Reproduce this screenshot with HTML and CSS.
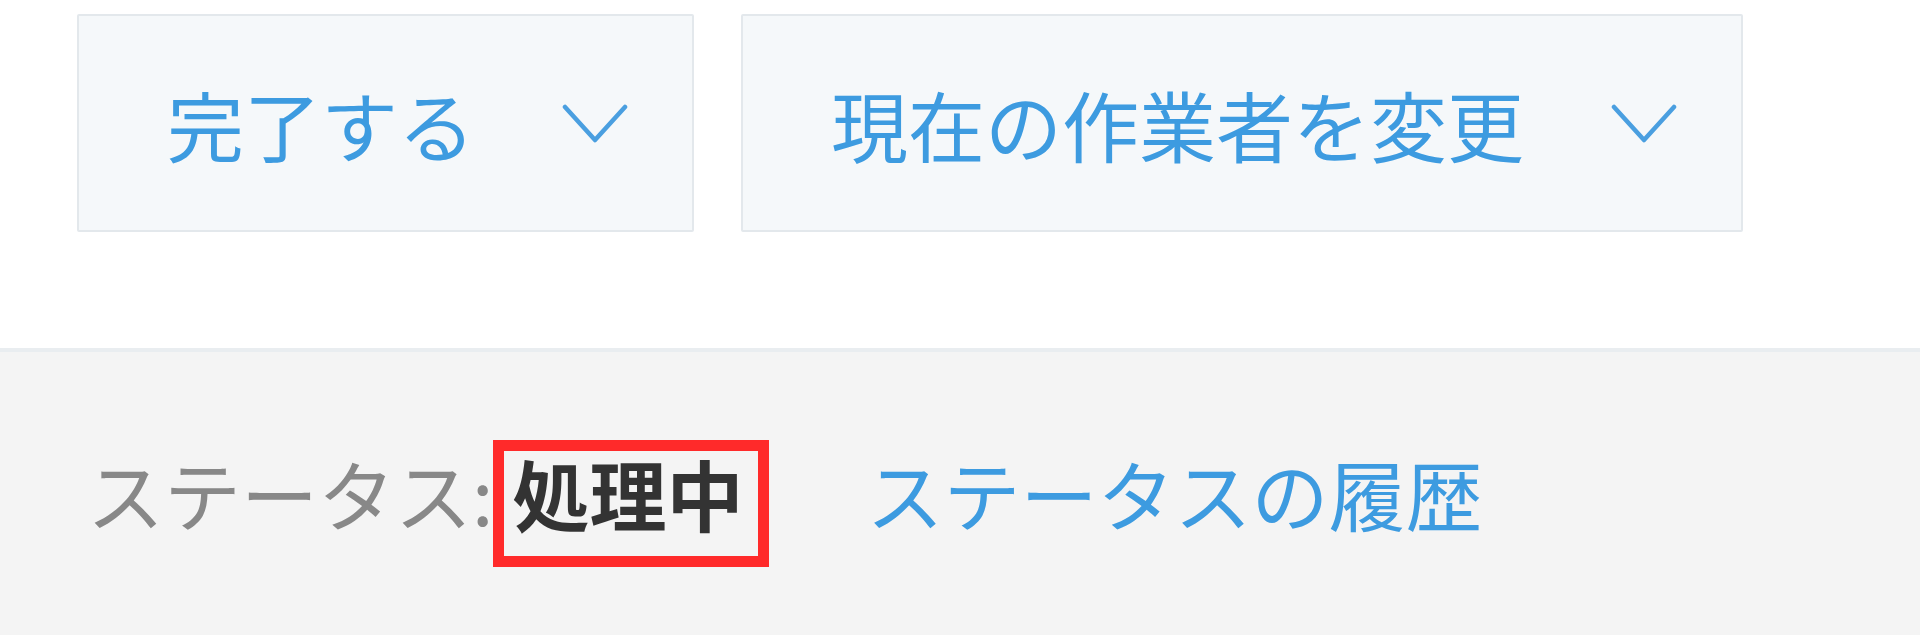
FILE: index.html
```html
<!DOCTYPE html>
<html lang="ja">
<head>
<meta charset="utf-8">
<title>ステータス</title>
<link rel="stylesheet" href="styles.css">
</head>
<body>
<div class="actions">
  <button class="action-btn" type="button">
    <span class="action-label">完了する</span>
    <svg class="chevron" width="66" height="40" viewBox="0 0 66 40"><polyline points="3,4 33,37 63,4" fill="none" stroke="#4a9fe0" stroke-width="4.5" stroke-linecap="round" stroke-linejoin="round"/></svg>
  </button>
  <button class="action-btn" type="button">
    <span class="action-label">現在の作業者を変更</span>
    <svg class="chevron" width="66" height="40" viewBox="0 0 66 40"><polyline points="3,4 33,37 63,4" fill="none" stroke="#4a9fe0" stroke-width="4.5" stroke-linecap="round" stroke-linejoin="round"/></svg>
  </button>
</div>
<div class="status-bar">
  <div class="status-row">
    <span class="status-label">ステータス:</span>
    <span class="status-value">処理中</span>
    <a class="status-history" href="#">ステータスの履歴</a>
  </div>
</div>
</body>
</html>
```

FILE: styles.css
```css
html, body {
  margin: 0;
  padding: 0;
  height: 100%;
}
body {
  background: #ffffff;
  font-family: "Noto Sans CJK JP", "Noto Sans", sans-serif;
  display: flex;
  flex-direction: column;
}
.actions {
  display: flex;
  gap: 47px;
  padding: 14px 0 0 77px;
  height: 348px;
  box-sizing: border-box;
  flex: none;
}
.action-btn {
  display: flex;
  align-items: center;
  height: 218px;
  box-sizing: border-box;
  padding: 0 64px 0 88px;
  background: #f5f8fa;
  border: 2px solid #e3e8ec;
  border-radius: 2px;
  font-family: inherit;
  cursor: pointer;
}
.action-label {
  font-size: 77px;
  font-weight: 400;
  line-height: 1;
  color: #3d9be0;
}
.chevron {
  display: block;
  margin-left: 87px;
  flex: none;
}
.status-bar {
  flex: 1;
  background: #f4f4f4;
  border-top: 4px solid #e9edf0;
  padding: 88px 0 0 87px;
}
.status-row {
  display: flex;
  align-items: baseline;
  font-size: 77px;
  font-weight: 400;
  line-height: 1;
}
.status-label {
  color: #888888;
}
.status-value {
  display: inline-block;
  color: #333333;
  font-weight: 700;
  border: 11px solid #ff2a2a;
  padding: 3px 15px 25px 8px;
}
.status-history {
  margin-left: 97px;
  color: #3d9be0;
  text-decoration: none;
}
```
